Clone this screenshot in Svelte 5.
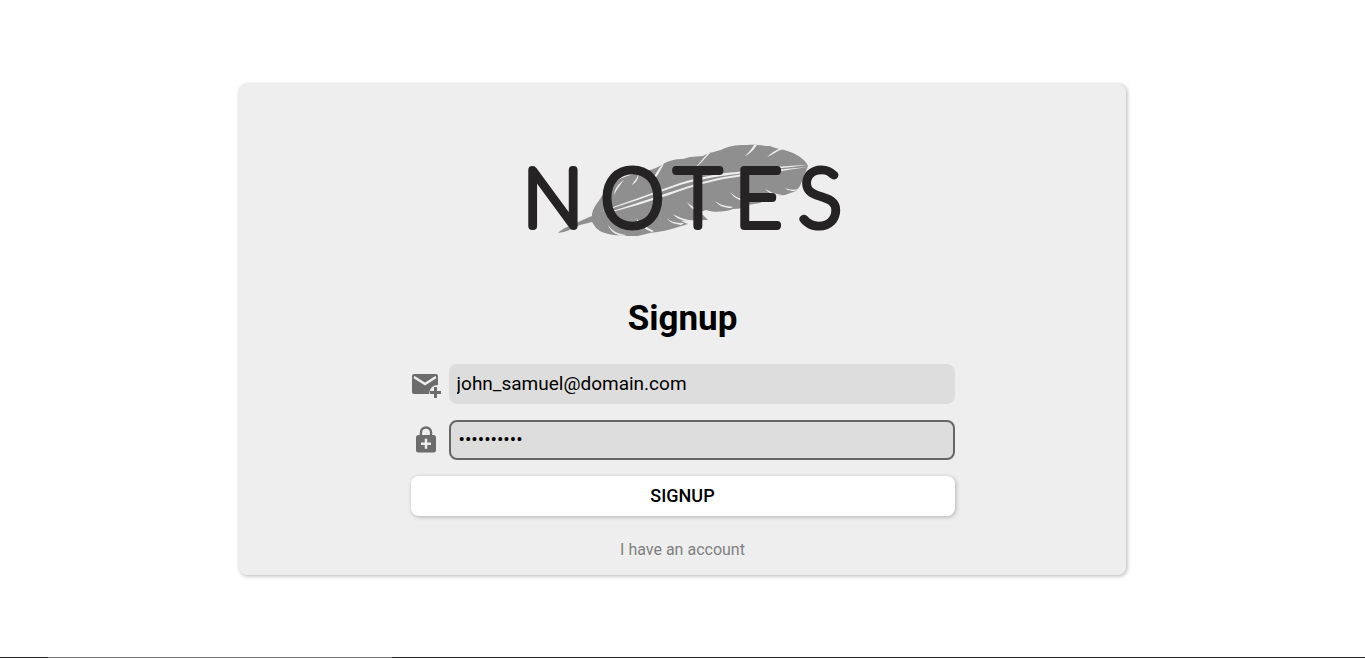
<script>
  let email = $state('john_samuel@domain.com');
  let password = $state('notebook12');
</script>

<main>
  <section class="card">
    <svg class="logo" viewBox="0 0 330 100" role="img" aria-label="Notes">
      <g transform="translate(2 0)">
        <path
          class="feather"
          d="M38 92 C43 87 48 86 54 83 L67 77 L72 75 C72 68 76 64 80 58 C84 52 88 46 95 41 C102 36 113 33 125 30 C132 29 136 27 142 24 C148 19 157 18 163 18 L170 16 L183 15 C188 11 197 11 203 8 C211 4 220 4 227 4 C236 3 243 5 250 5 C256 8 264 8 273 12 C281 16 286 20 288 25 L280 45 L276 50 L265 54 L252 55 L240 62 L228 64 C224 67 219 68 213 68 C206 71 193 72 186 69 L180 71 L188 79 C181 79 176 80 169 79 L161 80 L168 83 L155 87 C145 90 138 91 130 92 L118 95 C105 95 94 95 85 92 C78 90 75 86 72 81 L60 84 C52 88 46 91 38 92 Z"
        />
        <g class="vein">
          <path d="M80 71 C104 62 132 52 160 42 C180 36 200 32 217 31 C242 27 263 25 288 24 C263 27 242 29 217 33 C200 35 180 38 160 44 C132 54 104 64 80 71 Z" />
          <path d="M84 73 C104 66 133 57 160 48 C180 41 200 36 217 34 C242 30 263 28 288 26 C263 30 242 32 217 36 C200 38 180 43 160 50 C133 60 104 68 84 73 Z" />
          <path d="M94 54 C95 47 98 43 104 39 C100 44 97 48 94 54 Z" />
          <path d="M112 44 C114 40 117 38 119 32 C118 40 115 42 112 44 Z" />
          <path d="M129 42 C134 38 136 30 142 24 L144 23 C139 31 137 38 129 42 Z" />
          <path d="M175 27 C180 22 183 17 188 12 L190 12 C184 18 181 23 175 27 Z" />
          <path d="M224 16 C228 12 231 9 234 4 L237 4 C233 10 229 13 224 16 Z" />
          <path d="M247 16 C251 12 256 9 261 7 L263 8 C257 10 252 14 247 16 Z" />
          <path d="M245 48 C252 52 257 53 262 54 L258 55 C253 54 249 52 245 48 Z" />
          <path d="M265 47 C270 49 274 49 278 48 L275 50 C271 50 268 50 265 47 Z" />
          <path d="M210 51 C215 56 219 57 224 59 L222 60 C217 58 213 56 210 51 Z" />
          <path d="M195 60 C200 64 206 65 213 66 L211 67 C205 67 199 65 195 60 Z" />
          <path d="M167 61 C172 66 176 67 182 70 L179 71 C173 69 170 66 167 61 Z" />
          <path d="M147 77 C150 81 156 82 164 82 L161 84 C154 83 149 81 147 77 Z" />
          <path d="M153 73 C158 76 163 78 169 79 L166 80 C161 79 156 77 153 73 Z" />
          <path d="M116 77 C121 83 127 87 134 90 L132 91 C124 88 119 84 116 77 Z" />
          <path d="M88 84 C92 90 98 93 106 94 L104 95 C95 94 90 90 88 84 Z" />
        </g>
      </g>
      <text y="85" x="5 83 157 217 281">NOTES</text>
    </svg>
    <h1>Signup</h1>
    <form onsubmit={(event) => event.preventDefault()}>
      <div class="field">
        <label for="email" aria-label="Email">
          <svg viewBox="0 0 30 30">
            <path d="M3 5H25Q27 5 27 7V16Q19 16 18 25H3Q1 25 1 23V7Q1 5 3 5Z" />
            <path class="fold" d="M3 8L14 15L25 8" />
            <path d="M23 18h3v4h4v3h-4v4h-3v-4h-4v-3h4z" />
          </svg>
        </label>
        <input id="email" type="email" autocomplete="off" bind:value={email} />
      </div>
      <div class="field">
        <label for="password" aria-label="Password">
          <svg viewBox="0 0 24 24">
            <path d="M18 8h-1V6A5 5 0 0 0 7 6v2H6a2 2 0 0 0-2 2v10a2 2 0 0 0 2 2h12a2 2 0 0 0 2-2V10a2 2 0 0 0-2-2zM8.900 6a3.100 3.100 0 0 1 6.200 0v2H8.900zM16 16h-3v3h-2v-3H8v-2h3v-3h2v3h3z" />
          </svg>
        </label>
        <input id="password" class="active" type="password" autocomplete="off" bind:value={password} />
      </div>
      <button type="submit">SIGNUP</button>
    </form>
    <a href="#login">I have an account</a>
  </section>
  <div class="edge"></div>
</main>

<style>
  :global(body) {
    background: #fff;
    font-family: Roboto, sans-serif;
  }

  main {
    min-height: 100vh;
    box-sizing: border-box;
    padding-top: 1px;
    display: grid;
    grid-template-rows: 1fr auto;
    justify-items: center;
    align-items: center;
  }

  .card {
    width: 65%;
    box-sizing: border-box;
    padding: 57px 16px 16px;
    display: flex;
    flex-direction: column;
    align-items: center;
    border-radius: 8px;
    background: #eee;
    box-shadow: 1px 1px 4px rgba(0, 0, 0, 0.3);
  }

  .logo {
    width: 330px;
    max-width: 100%;
    overflow: visible;
  }

  .feather {
    fill: #8f8f8f;
  }

  .vein {
    fill: #eee;
  }

  .logo text {
    font-family: Lato, sans-serif;
    font-weight: 100;
    font-size: 80px;
    fill: #252324;
    stroke: #252324;
    stroke-width: 8;
    stroke-linejoin: round;
    stroke-linecap: round;
  }

  h1 {
    margin: 56px 0 24px;
    font-size: 35px;
    line-height: 43px;
    font-weight: 700;
    color: #000;
  }

  form {
    width: 100%;
    max-width: 544px;
    display: flex;
    flex-direction: column;
    gap: 16px;
  }

  .field {
    display: flex;
    align-items: center;
    gap: 8px;
  }

  label {
    display: flex;
  }

  label svg {
    width: 30px;
    height: 30px;
    overflow: visible;
    fill: #6c6c6c;
  }

  .fold {
    fill: none;
    stroke: #eee;
    stroke-width: 2.5;
  }

  input {
    flex: 1;
    min-width: 0;
    height: 40px;
    box-sizing: border-box;
    padding: 0 8px;
    border: 0;
    border-radius: 8px;
    outline: 0;
    background: #ddd;
    color: #000;
    font: 400 19px Roboto, sans-serif;
  }

  .active {
    border: 2px solid #666;
  }

  button {
    height: 40px;
    border: 0;
    border-radius: 8px;
    background: #fff;
    color: #000;
    font: 500 18px Roboto, sans-serif;
    box-shadow: 1px 1px 4px rgba(0, 0, 0, 0.25);
  }

  a {
    margin-top: 24px;
    font-size: 16px;
    line-height: 19px;
    color: #808080;
    text-decoration: none;
  }

  .edge {
    width: 100%;
    height: 1px;
    background: linear-gradient(90deg, #222 48px, #777 48px 392px, #222 392px);
  }
</style>
